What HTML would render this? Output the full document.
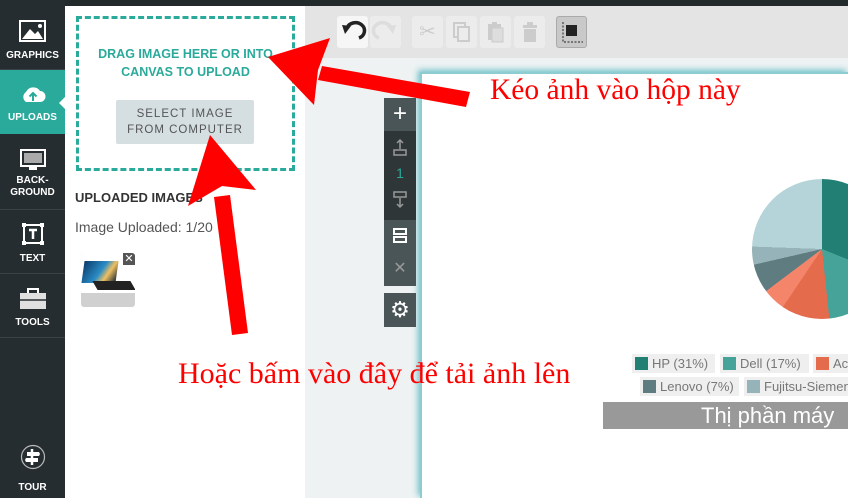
<!DOCTYPE html>
<html style="width:848px;height:498px;overflow:hidden"><head><meta charset="utf-8"><style>
*{margin:0;padding:0;box-sizing:border-box}
body{width:848px;height:498px;overflow:hidden;position:relative;background:#eef2f3;font-family:"Liberation Sans",sans-serif}
.abs{position:absolute}
.side{left:0;top:0;width:65px;height:498px;background:#262d30}
.it{position:absolute;left:0;width:65px;color:#fff;font-size:10px;text-align:center;font-weight:bold;border-bottom:1px solid #3a4245}
.it span{position:absolute;left:0;width:65px;line-height:12px}
.tb{position:absolute;top:16px;width:31px;height:32px;background:#ececec;border-radius:3px}
.leg{position:absolute;height:19px;background:#efefef;font-size:13px;color:#777;line-height:19px;padding-left:20px;white-space:nowrap}
.leg i{position:absolute;left:3px;top:3px;width:13px;height:13px}
</style></head><body>
<div class="abs" style="left:0;top:0;width:848px;height:6px;background:#232a2c"></div>
<div class="abs side"></div>
<div class="it" style="top:6px;height:64px"><svg class="abs" style="left:19px;top:14px" width="27" height="22"><rect x="1" y="1" width="25" height="20" fill="none" stroke="#fff" stroke-width="2"/><path d="M3 19 L11 9 L16 14 L19 11 L24 19Z" fill="#fff"/><circle cx="21" cy="6" r="2" fill="#fff"/></svg><span style="top:44px">GRAPHICS</span></div>
<div class="it" style="top:70px;height:64px;background:#2aaa9b;border:none"><svg class="abs" style="left:19px;top:14px" width="28" height="20"><path d="M7 18 A6 6 0 0 1 7 8 A8 8 0 0 1 21 7 A5.5 5.5 0 0 1 21 18Z" fill="#fff"/><path d="M14 17 V9 M10.5 12.5 L14 9 L17.5 12.5" stroke="#2aaa9b" stroke-width="2" fill="none"/></svg><span style="top:42px">UPLOADS</span></div>
<div class="abs" style="left:59px;top:96px;width:0;height:0;border-top:7px solid transparent;border-bottom:7px solid transparent;border-right:7px solid #fff"></div>
<div class="it" style="top:134px;height:76px"><svg class="abs" style="left:20px;top:15px" width="26" height="22"><rect x="1" y="1" width="24" height="16" fill="none" stroke="#fff" stroke-width="2"/><rect x="4" y="4" width="18" height="10" fill="#aaa"/><rect x="9" y="18" width="8" height="3" fill="#fff"/></svg><span style="top:41px">BACK-<br>GROUND</span></div>
<div class="it" style="top:210px;height:64px"><svg class="abs" style="left:21px;top:12px" width="24" height="24"><rect x="3" y="3" width="18" height="18" fill="none" stroke="#fff" stroke-width="2"/><rect x="1" y="1" width="4" height="4" fill="#fff"/><rect x="19" y="1" width="4" height="4" fill="#fff"/><rect x="1" y="19" width="4" height="4" fill="#fff"/><rect x="19" y="19" width="4" height="4" fill="#fff"/><path d="M8 8H16M12 8V17" stroke="#fff" stroke-width="2.5"/></svg><span style="top:43px">TEXT</span></div>
<div class="it" style="top:274px;height:64px"><svg class="abs" style="left:19px;top:14px" width="28" height="22"><rect x="9" y="1" width="10" height="5" fill="none" stroke="#fff" stroke-width="2"/><rect x="1" y="5" width="26" height="16" fill="#e0e0e0"/><path d="M1 12H27" stroke="#262d30" stroke-width="1.5"/></svg><span style="top:43px">TOOLS</span></div>
<svg class="abs" style="left:20px;top:444px" width="26" height="26"><circle cx="13" cy="13" r="11.5" fill="none" stroke="#bbb" stroke-width="1.2"/><path d="M12 5V21" stroke="#fff" stroke-width="2.5"/><path d="M7 8H19L20 10L19 12H7Z M6 14H18V18H6L5 16Z" fill="#fff"/></svg>
<div class="abs" style="left:0;top:482px;width:65px;text-align:center;color:#fff;font-size:10px;font-weight:bold">TOUR</div>

<div class="abs" style="left:65px;top:6px;width:240px;height:492px;background:#fff"></div>
<div class="abs" style="left:76px;top:16px;width:219px;height:155px;border:3px dashed #2aaa9b"></div>
<div class="abs" style="left:78px;top:45px;width:215px;text-align:center;color:#2aaa9b;font-size:12.5px;font-weight:bold;line-height:18px">DRAG IMAGE HERE OR INTO<br>CANVAS TO UPLOAD</div>
<div class="abs" style="left:116px;top:100px;width:138px;height:44px;background:#d5dfe2;border-radius:2px;text-align:center;color:#555;font-size:11.5px;letter-spacing:1px;line-height:16px;padding-top:6px">SELECT IMAGE<br>FROM COMPUTER</div>
<div class="abs" style="left:75px;top:190px;font-size:13px;font-weight:bold;color:#333">UPLOADED IMAGES</div>
<div class="abs" style="left:75px;top:219px;font-size:14px;color:#555">Image Uploaded: 1/20</div>
<div class="abs" style="left:81px;top:253px;width:54px;height:54px;background:#d0d0d0;border-radius:3px;overflow:hidden"><div style="position:absolute;left:0;top:0;width:54px;height:40px;background:#fff"></div><div style="position:absolute;left:2px;top:8px;width:34px;height:22px;background:linear-gradient(120deg,#0b3b6a,#2a8cc6 50%,#f0c060 70%,#123);transform:skewX(-8deg)"></div><div style="position:absolute;left:14px;top:28px;width:38px;height:9px;background:#222;transform:skewX(30deg)"></div><div style="position:absolute;right:0;top:0;width:12px;height:12px;background:#555;color:#fff;font-size:11px;line-height:12px;text-align:center">✕</div></div>

<div class="abs" style="left:305px;top:6px;width:543px;height:52px;background:#e4e4e4"></div>
<div class="tb" style="left:337px;background:#f6f6f6"><svg width="31" height="32"><path d="M10 12 A9 8 0 1 1 22 22" stroke="#222" stroke-width="3.5" fill="none"/><path d="M5 9 L14 10 L8 18Z" fill="#222"/></svg></div>
<div class="tb" style="left:370px"><svg width="31" height="32"><path d="M21 12 A9 8 0 1 0 9 22" stroke="#ddd" stroke-width="3.5" fill="none"/><path d="M26 9 L17 10 L23 18Z" fill="#ddd"/></svg></div>
<div class="tb" style="left:412px;color:#ccc;font-size:20px;text-align:center;line-height:32px">✂</div>
<div class="tb" style="left:446px"><svg width="31" height="32"><rect x="8" y="7" width="11" height="14" fill="none" stroke="#ccc" stroke-width="2"/><rect x="12" y="11" width="11" height="14" fill="#ececec" stroke="#ccc" stroke-width="2"/></svg></div>
<div class="tb" style="left:480px"><svg width="31" height="32"><rect x="8" y="8" width="13" height="16" fill="#ccc"/><rect x="12" y="12" width="11" height="14" fill="#ddd" stroke="#ccc"/><rect x="12" y="6" width="5" height="4" fill="#ccc"/></svg></div>
<div class="tb" style="left:514px"><svg width="31" height="32"><rect x="9" y="9" width="14" height="3" fill="#ccc"/><rect x="13" y="6" width="6" height="3" fill="#ccc"/><rect x="10" y="13" width="12" height="13" fill="#ccc"/></svg></div>
<div class="tb" style="left:556px;background:#c9c9c9;border:1px solid #aaa"><svg width="29" height="30"><rect x="9" y="8" width="11" height="11" fill="#222"/><path d="M6 5V25H26" stroke="#222" stroke-dasharray="2 1.5" fill="none"/></svg></div>

<div class="abs" style="left:420px;top:72px;width:428px;height:426px;background:#fff;box-shadow:-2px -2px 6px #6cc0c8;border-left:2px solid #8dcdd2;border-top:2px solid #8dcdd2"></div>
<div class="abs" style="left:384px;top:98px;width:32px;height:33px;background:#4a5557;color:#fff;font-size:24px;text-align:center;line-height:32px">+</div>
<div class="abs" style="left:384px;top:131px;width:32px;height:89px;background:#2e3638"><svg class="abs" style="left:9px;top:8px" width="14" height="18"><path d="M7 1V10 M4 4L7 1L10 4" stroke="#999" stroke-width="1.5" fill="none"/><rect x="1" y="11" width="12" height="5" fill="none" stroke="#999" stroke-width="1.5"/></svg><div class="abs" style="left:0;top:34px;width:32px;text-align:center;color:#2aaa9b;font-size:14px">1</div><svg class="abs" style="left:9px;top:60px" width="14" height="18"><rect x="1" y="1" width="12" height="5" fill="none" stroke="#999" stroke-width="1.5"/><path d="M7 7V16 M4 13L7 16L10 13" stroke="#999" stroke-width="1.5" fill="none"/></svg></div>
<div class="abs" style="left:384px;top:220px;width:32px;height:66px;background:#4a5557"><svg class="abs" style="left:9px;top:8px" width="14" height="16"><rect x="1" y="1" width="12" height="5" fill="none" stroke="#fff" stroke-width="2"/><rect x="1" y="9" width="12" height="5" fill="none" stroke="#fff" stroke-width="2"/></svg><div class="abs" style="left:0;top:38px;width:32px;text-align:center;color:#999;font-size:16px">✕</div></div>
<div class="abs" style="left:384px;top:293px;width:32px;height:34px;background:#4a5557;color:#fff;font-size:22px;text-align:center;line-height:34px">⚙</div>

<div class="abs" style="left:752px;top:179px;width:140px;height:140px;border-radius:50%;background:conic-gradient(#217f74 0 112deg,#46a39a 112deg 174deg,#e56b4d 174deg 214deg,#f4856a 214deg 233deg,#5f7c80 233deg 257deg,#95b3b8 257deg 272deg,#b5d4d9 272deg 360deg)"></div>
<div class="leg" style="left:632px;top:354px;width:83px"><i style="background:#217f74"></i>HP (31%)</div>
<div class="leg" style="left:720px;top:354px;width:89px"><i style="background:#46a39a"></i>Dell (17%)</div>
<div class="leg" style="left:813px;top:354px;width:60px"><i style="background:#e56b4d"></i>Acer</div>
<div class="leg" style="left:640px;top:377px;width:99px"><i style="background:#5f7c80"></i>Lenovo (7%)</div>
<div class="leg" style="left:744px;top:377px;width:120px"><i style="background:#95b3b8"></i>Fujitsu-Siemens</div>
<div class="abs" style="left:603px;top:402px;width:245px;height:27px;background:#999;color:#fff;font-size:22px;line-height:27px;padding-left:98px;white-space:nowrap;overflow:hidden">Thị phần máy</div>

<svg class="abs" style="left:0;top:0" width="848" height="498">
<polygon points="470,92 466,107 318,80 322,66" fill="#f00"/>
<polygon points="268,57 330,38 318,70 314,105" fill="#f00"/>
<polygon points="232,335 248,333 230,195 214,197" fill="#f00"/>
<polygon points="210,135 256,190 222,186 188,206" fill="#f00"/>
</svg>
<div class="abs" style="left:490px;top:74px;font-family:'Liberation Serif',serif;font-size:29.5px;color:#f00;white-space:nowrap">Kéo ảnh vào hộp này</div>
<div class="abs" style="left:178px;top:357px;font-family:'Liberation Serif',serif;font-size:30px;color:#f00;white-space:nowrap">Hoặc bấm vào đây để tải ảnh lên</div>
</body></html>
